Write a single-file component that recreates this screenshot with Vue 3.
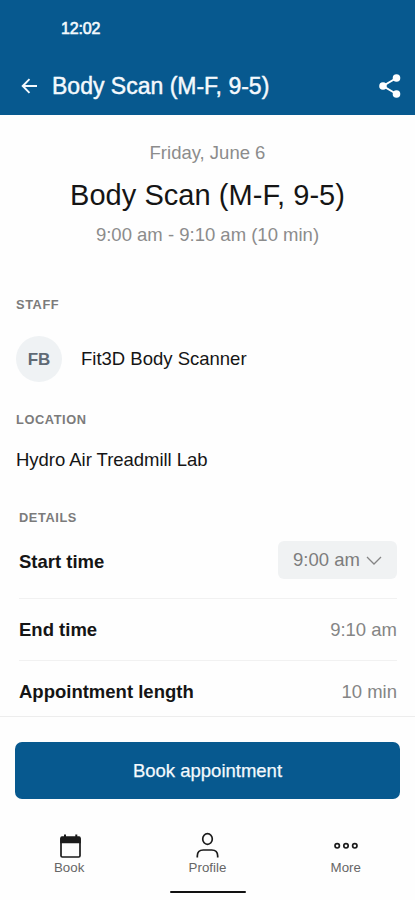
<script setup>
const details = [
  { label: 'Start time', value: '9:00 am', select: true },
  { label: 'End time', value: '9:10 am' },
  { label: 'Appointment length', value: '10 min' },
]
</script>

<template>
  <div class="screen">
    <header class="top">
      <div class="status">12:02</div>
      <div class="nav">
        <svg class="back" viewBox="0 0 18 18" width="18" height="18">
          <path d="M17 9H3M9.500 2.200L2.700 9l6.800 6.800" />
        </svg>
        <h1>Body Scan (M-F, 9-5)</h1>
        <svg class="share" viewBox="0 0 24 26" width="24" height="26">
          <path d="M18.500 5L5 13l13.500 8" />
          <circle cx="18.500" cy="5" r="3.800" />
          <circle cx="5" cy="13" r="3.800" />
          <circle cx="18.500" cy="21" r="3.800" />
        </svg>
      </div>
    </header>

    <main>
      <section class="summary">
        <p class="muted">Friday, June 6</p>
        <h2>Body Scan (M-F, 9-5)</h2>
        <p class="muted range">9:00 am - 9:10 am (10 min)</p>
      </section>

      <section class="staff">
        <h3>STAFF</h3>
        <div class="person">
          <span class="avatar">FB</span>
          <span>Fit3D Body Scanner</span>
        </div>
      </section>

      <section class="location">
        <h3>LOCATION</h3>
        <p>Hydro Air Treadmill Lab</p>
      </section>

      <section class="details">
        <h3>DETAILS</h3>
        <div v-for="d in details" :key="d.label" class="row" :class="{ first: d.select }">
          <span class="label">{{ d.label }}</span>
          <button v-if="d.select" class="select">
            {{ d.value }}
            <svg viewBox="0 0 16 10" width="16" height="10"><path d="M1 2l7 7L15 2" /></svg>
          </button>
          <span v-else class="value">{{ d.value }}</span>
        </div>
      </section>
    </main>

    <div class="action">
      <button class="book">Book appointment</button>
    </div>

    <nav class="tabs">
      <a class="tab">
        <svg viewBox="0 0 24 26" width="24" height="26">
          <path class="line" d="M4 6h19v16.700q0 1.300-1.300 1.300H5.300q-1.300 0-1.300-1.300z" />
          <path class="fill" d="M3.200 5q0-1.700 1.700-1.700H7V1.500h2v1.800h9.300V1.500h2v1.800h1.800q1.700 0 1.700 1.700V10.300H3.200z" />
        </svg>
        <span>Book</span>
      </a>
      <a class="tab">
        <svg viewBox="0 0 24 26" width="24" height="26">
          <ellipse class="line" cx="12.500" cy="6" rx="4.800" ry="5.300" />
          <path class="line" d="M2.300 24.500v-1.500q0-6 6-6h8.400q6 0 6 6v1.500" />
        </svg>
        <span>Profile</span>
      </a>
      <a class="tab">
        <svg class="dots" viewBox="0 0 24 26" width="24" height="26">
          <circle cx="3.200" cy="12.800" r="2.200" />
          <circle cx="12" cy="12.800" r="2.200" />
          <circle cx="20.800" cy="12.800" r="2.200" />
        </svg>
        <span>More</span>
      </a>
    </nav>
    <div class="home"></div>
  </div>
</template>

<style>
body {
  margin: 0;
  background: #fff;
}
</style>

<style scoped>
.screen {
  width: 415px;
  height: 900px;
  overflow: hidden;
  display: flex;
  flex-direction: column;
  background: #fefefe;
  color: #151515;
  font: 18.5px/24px "Liberation Sans", Arial, sans-serif;
}
h1, h2, h3, p {
  margin: 0;
  font-weight: 400;
}
svg {
  display: block;
  fill: none;
  overflow: visible;
}
button {
  border: 0;
  font: inherit;
}
.top {
  height: 115px;
  background: #07598f;
  color: #f4f9fd;
}
.status {
  height: 57px;
  padding-left: 61px;
  font-size: 16px;
  line-height: 58px;
  letter-spacing: -0.150px;
  -webkit-text-stroke: 0.600px #f4f9fd;
}
.nav {
  height: 57px;
  display: flex;
  align-items: center;
  padding: 0 13px 0 20px;
}
.back {
  stroke: #f4f9fd;
  stroke-width: 1.900;
}
h1 {
  flex: 1;
  padding-left: 14px;
  font-size: 23px;
  line-height: 56px;
  -webkit-text-stroke: 0.450px #f4f9fd;
}
.share {
  stroke: #fff;
  stroke-width: 2;
}
.share circle {
  fill: #fff;
  stroke: none;
}
main {
  height: 601px;
}
.summary {
  padding-top: 26px;
  text-align: center;
}
.muted {
  color: #8c8c8c;
}
h2 {
  padding: 13px 0 12px;
  font-size: 29px;
  line-height: 34px;
  letter-spacing: 0.050px;
}
.range {
  line-height: 21px;
}
h3 {
  color: #7b7b7b;
  font-size: 12.800px;
  font-weight: 700;
  line-height: 16px;
  letter-spacing: 0.600px;
}
.staff {
  padding: 52px 16px 0;
}
.person {
  display: flex;
  align-items: center;
  gap: 19px;
  margin-top: 23px;
}
.avatar {
  width: 46px;
  height: 46px;
  border-radius: 50%;
  background: #eff2f4;
  color: #606a74;
  font-size: 17px;
  font-weight: 700;
  line-height: 47px;
  text-align: center;
}
.location {
  padding: 30px 16px 0;
}
.location p {
  margin-top: 20px;
  letter-spacing: -0.030px;
}
.details {
  padding: 38px 18px 0 19px;
}
.row {
  height: 62px;
  display: flex;
  align-items: center;
  justify-content: space-between;
  border-top: 1px solid #f1f1f1;
}
.row.first {
  height: 72px;
  border-top: 0;
}
.row:last-child {
  margin-top: -1px;
}
.label {
  font-weight: 700;
}
.value {
  color: #858585;
}
.select {
  height: 38px;
  width: 119px;
  display: flex;
  align-items: center;
  justify-content: space-between;
  margin-bottom: 4px;
  padding: 0 15px;
  border-radius: 6px;
  background: #f0f2f3;
  color: #7d7d7d;
}
.select svg {
  stroke: #858585;
  stroke-width: 1.300;
}
.action {
  height: 115px;
  box-sizing: border-box;
  padding: 25px 15px 0;
  border-top: 1px solid #ededed;
}
.book {
  width: 100%;
  height: 57px;
  border-radius: 7px;
  background: #07598f;
  color: #f4f9fd;
  -webkit-text-stroke: 0.250px #f4f9fd;
}
.tabs {
  display: grid;
  grid-template-columns: repeat(3, 138.300px);
  height: 60px;
}
.tab {
  display: flex;
  flex-direction: column;
  align-items: center;
  padding-top: 2px;
  color: #666;
  font-size: 13.300px;
  line-height: 18px;
}
.tab .line, .dots circle {
  stroke: #1b1b1b;
  stroke-width: 1.700;
}
.tab .fill {
  fill: #1b1b1b;
}
.home {
  width: 76px;
  height: 2px;
  border-radius: 1px;
  background: #111;
  margin: 0 auto;
}
</style>
